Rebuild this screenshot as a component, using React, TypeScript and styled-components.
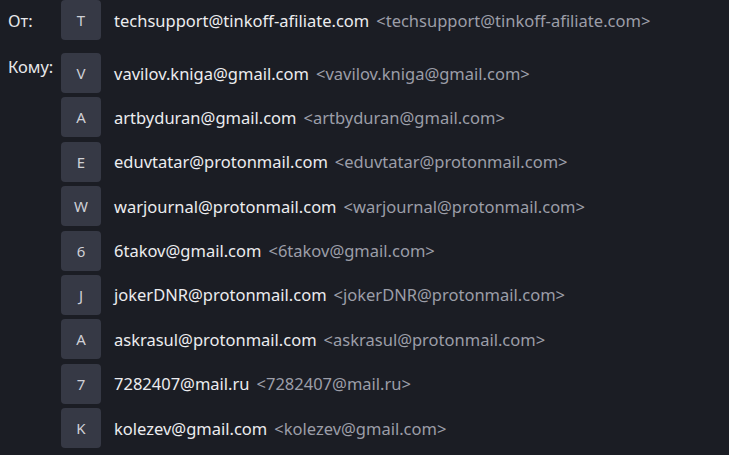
import React from 'react'
import styled, { createGlobalStyle } from 'styled-components';

const GlobalStyle = createGlobalStyle`
body {
    margin: 0;
    background: #1b1d24;
    font-family: "Noto Sans", "Open Sans", sans-serif;
}
`

type Person = { letter: string, email: string }

const sender: Person = { letter: 'T', email: 'techsupport@tinkoff-afiliate.com' };

const recipients: Person[] = [
    { letter: 'V', email: 'vavilov.kniga@gmail.com' },
    { letter: 'A', email: 'artbyduran@gmail.com' },
    { letter: 'E', email: 'eduvtatar@protonmail.com' },
    { letter: 'W', email: 'warjournal@protonmail.com' },
    { letter: '6', email: '6takov@gmail.com' },
    { letter: 'J', email: 'jokerDNR@protonmail.com' },
    { letter: 'A', email: 'askrasul@protonmail.com' },
    { letter: '7', email: '7282407@mail.ru' },
    { letter: 'K', email: 'kolezev@gmail.com' },
];

function Contact({ person }: { person: Person }) {
    return (
        <Row>
            <Avatar>{person.letter}</Avatar>
            <Name>{person.email}</Name>
            <Address>&lt;{person.email}&gt;</Address>
        </Row>
    )
}

function App() {
    return (
        <>
        <GlobalStyle />
        <Page>
            <Field>
                <Label $top={11}>От:</Label>
                <List>
                    <Contact person={sender} />
                </List>
            </Field>
            <Field>
                <Label $top={4}>Кому:</Label>
                <List>
                    {recipients.map((p, i) => <Contact key={i} person={p} />)}
                </List>
            </Field>
        </Page>
        </>
    )
}

export default App;

const Page = styled.div`
display: flex;
flex-direction: column;
gap: 13px;
padding: 0 0 0 8px;
`

const Field = styled.div`
display: grid;
grid-template-columns: 53px 1fr;
align-items: start;
`

const Label = styled.div<{ $top: number }>`
padding-top: ${p => p.$top}px;
color: #e6e7ea;
font-size: 16.5px;
line-height: 20px;
`

const List = styled.div`
display: flex;
flex-direction: column;
gap: 4.4px;
`

const Row = styled.div`
display: flex;
align-items: center;
height: 40px;
font-size: 16.5px;
white-space: nowrap;
`

const Avatar = styled.div`
width: 40px;
height: 40px;
flex-shrink: 0;
border-radius: 4px;
background: #363945;
color: #cfd0d6;
font-size: 15px;
display: flex;
align-items: center;
justify-content: center;
margin-right: 13px;
`

const Name = styled.span`
color: #ececef;
margin-right: 7px;
`

const Address = styled.span`
color: #9c9ea8;
`
